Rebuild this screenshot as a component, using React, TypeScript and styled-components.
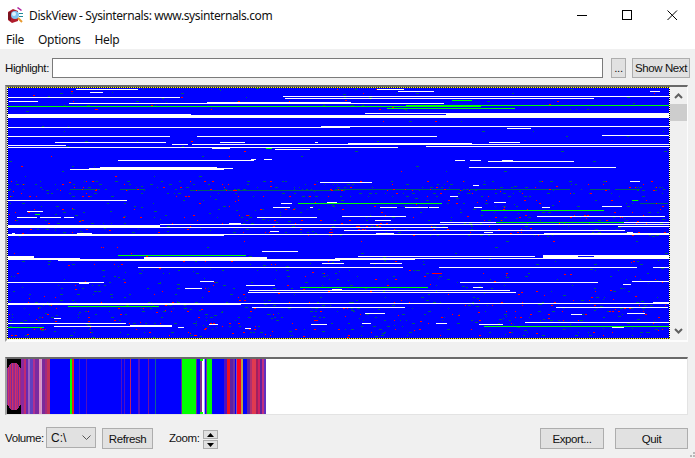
// App.tsx
import React from "react";
import styled, { createGlobalStyle } from "styled-components";

const GlobalStyle = createGlobalStyle`
  html, body {
    margin: 0;
    padding: 0;
    background: #f0f0f0;
  }
  body {
    font-family: "Liberation Sans", Arial, sans-serif;
    font-size: 11.5px;
    color: #000;
  }
`;

const Win = styled.div`
  position: relative;
  width: 695px;
  height: 458px;
  overflow: hidden;
  display: flex;
  flex-direction: column;
  background: #f0f0f0;
`;

const TitleBar = styled.div`
  display: flex;
  align-items: center;
  height: 30px;
  flex: none;
  background: #fff;
  padding-left: 7px;
`;

const TitleText = styled.span`
  margin-left: 5px;
  font-family: "Noto Sans", sans-serif;
  font-size: 12px;
  letter-spacing: -0.38px;
  color: #111;
`;

const WinButtons = styled.div`
  display: flex;
  margin-left: auto;
`;

const WinButton = styled.div`
  width: 45px;
  height: 29px;
  display: flex;
  align-items: center;
  justify-content: center;
`;

const MenuBar = styled.div`
  display: flex;
  align-items: center;
  gap: 14px;
  height: 18px;
  flex: none;
  background: #fff;
  padding: 0 0 1px 6px;
`;

const MenuItem = styled.span`
  font-family: "Noto Sans", sans-serif;
  font-size: 12px;
  letter-spacing: -0.3px;
  color: #111;
`;

const Toolbar = styled.div`
  display: flex;
  align-items: center;
  height: 20px;
  flex: none;
  margin: 9px 5px 7px 5px;
`;

const Label = styled.span`
  font-size: 11.5px;
  letter-spacing: -0.4px;
  color: #111;
`;

const HighlightInput = styled.div`
  flex: 1;
  height: 20px;
  box-sizing: border-box;
  margin: 0 8px 0 3px;
  background: #fff;
  border: 1px solid #7a7a7a;
`;

const Btn = styled.div<{ $w: number; $h?: number; $ml?: number }>`
  box-sizing: border-box;
  flex: none;
  width: ${(p) => p.$w}px;
  height: ${(p) => p.$h ?? 20}px;
  margin-left: ${(p) => p.$ml ?? 0}px;
  display: flex;
  align-items: center;
  justify-content: center;
  white-space: nowrap;
  background: #e1e1e1;
  border: 1px solid #adadad;
  font-size: 11.5px;
  letter-spacing: -0.4px;
  color: #111;
`;

const ChartFrame = styled.div`
  display: flex;
  flex: none;
  height: 257px;
  box-sizing: border-box;
  margin: 0 7px 0 5px;
  background: #f0f0f0;
  border-top: 2px solid #696969;
  border-left: 2px solid #a0a0a0;
  border-right: 1px solid #fcfcfc;
  border-bottom: 2px solid #fcfcfc;
`;

const Canvas = styled.svg`
  display: block;
  flex: none;
  shape-rendering: crispEdges;
`;

const ScrollBar = styled.div`
  flex: 1;
  display: flex;
  flex-direction: column;
  background: #f0f0f0;
`;

const ScrollArrow = styled.div`
  height: 17px;
  flex: none;
  display: flex;
  align-items: center;
  justify-content: center;
`;

const ScrollThumb = styled.div`
  height: 17px;
  flex: none;
  background: #cdcdcd;
`;

const ScrollTrack = styled.div`
  flex: 1;
`;

const StripFrame = styled.div`
  flex: none;
  height: 58px;
  box-sizing: border-box;
  margin: 15px 7px 0 5px;
  background: #fff;
  border-top: 2px solid #696969;
  border-left: 2px solid #a0a0a0;
  border-right: 1px solid #e3e3e3;
  border-bottom: 1px solid #e3e3e3;
`;

const Footer = styled.div`
  display: flex;
  align-items: flex-start;
  flex: none;
  margin: 13px 7px 0 5px;
`;

const FooterLabel = styled(Label)<{ $w: number; $ml?: number }>`
  flex: none;
  width: ${(p) => p.$w}px;
  margin-left: ${(p) => p.$ml ?? 0}px;
  line-height: 20px;
`;

const VolumeSelect = styled.div`
  box-sizing: border-box;
  width: 50px;
  height: 21px;
  margin-top: -1px;
  padding: 0 4px 0 4px;
  display: flex;
  align-items: center;
  justify-content: space-between;
  background: #e1e1e1;
  border: 1px solid #adadad;
  font-size: 12px;
  color: #111;
`;

const Spinner = styled.div`
  display: flex;
  flex-direction: column;
  gap: 1px;
  width: 15px;
  margin-top: 2px;
`;

const SpinButton = styled.div`
  box-sizing: border-box;
  height: 9px;
  display: flex;
  align-items: center;
  justify-content: center;
  background: #e1e1e1;
  border: 1px solid #adadad;
`;

const Spacer = styled.div`
  flex: 1;
`;

const Grip = styled.svg`
  position: absolute;
  right: 0;
  bottom: 0;
`;

// page coordinates: x1, x2, y, height
type Run = [number, number, number, number?];

const whiteRuns: Run[] = [
  [76, 138, 88], [90, 103, 91], [8, 180, 96], [9, 38, 100], [69, 207, 102], [207, 340, 101, 2],
  [283, 340, 95], [285, 340, 97], [8, 191, 113, 4], [191, 340, 114, 3], [8, 340, 126], [321, 340, 125],
  [8, 170, 135], [197, 340, 135], [55, 166, 141], [220, 245, 141], [315, 318, 141], [8, 66, 144],
  [172, 188, 143], [192, 340, 143], [8, 340, 146], [212, 230, 147], [275, 310, 148], [118, 254, 159],
  [251, 256, 158], [264, 272, 158], [100, 217, 166], [89, 233, 167], [70, 224, 168], [320, 340, 181],
  [8, 127, 199], [281, 292, 202], [327, 337, 201], [273, 290, 206], [310, 313, 206], [27, 43, 210],
  [377, 404, 88], [398, 434, 90], [650, 660, 90], [335, 669, 95], [335, 594, 97], [335, 351, 101, 2],
  [351, 444, 102], [446, 669, 112, 5], [365, 446, 112], [335, 607, 114, 3], [335, 669, 125], [335, 350, 126],
  [507, 531, 127], [335, 437, 135], [602, 669, 134], [348, 472, 142], [489, 520, 141], [335, 669, 143],
  [335, 398, 146], [426, 669, 145], [469, 616, 166], [488, 574, 160], [455, 465, 159], [470, 481, 159],
  [502, 513, 159], [630, 640, 180], [335, 372, 181], [473, 479, 184], [450, 458, 195], [494, 506, 201],
  [380, 397, 206], [405, 428, 206], [429, 439, 206], [474, 482, 206], [542, 550, 206], [602, 622, 205],
  [17, 37, 216], [40, 61, 216], [64, 74, 216], [257, 317, 216], [8, 160, 224, 2], [160, 340, 223],
  [229, 241, 222], [13, 25, 225], [8, 340, 226], [270, 279, 230], [8, 224, 233, 2], [77, 92, 232],
  [12, 15, 232], [224, 340, 233], [262, 298, 250], [8, 34, 255, 3], [34, 80, 257, 2], [8, 58, 257, 2],
  [58, 340, 258, 2], [144, 267, 256, 2], [322, 340, 262], [138, 340, 266], [200, 214, 280], [8, 104, 281],
  [79, 89, 282], [185, 202, 287], [246, 275, 284], [332, 340, 288], [249, 340, 289], [248, 340, 291],
  [8, 241, 302, 2], [241, 340, 302], [252, 340, 306], [54, 61, 317], [8, 126, 322], [209, 218, 323],
  [311, 327, 323], [54, 172, 325], [130, 172, 324], [178, 184, 326], [245, 251, 327], [342, 406, 215],
  [537, 665, 215], [375, 391, 219], [335, 669, 223], [440, 669, 221], [335, 448, 226], [618, 669, 225],
  [344, 625, 229], [484, 493, 231], [335, 669, 233], [376, 394, 232], [627, 633, 231], [544, 669, 232],
  [335, 415, 257, 2], [543, 669, 254, 3], [358, 535, 255], [414, 669, 257], [335, 344, 262], [370, 402, 262],
  [335, 403, 266], [439, 637, 266], [653, 669, 266], [460, 598, 281], [632, 669, 280], [623, 631, 283],
  [335, 342, 288], [473, 483, 286], [335, 510, 289], [335, 516, 291], [335, 669, 302], [653, 669, 301, 2],
  [335, 405, 306], [556, 668, 306], [365, 385, 312], [571, 582, 313], [627, 645, 312], [525, 669, 321],
  [362, 371, 322], [479, 503, 323], [436, 447, 322], [612, 624, 326],
];

const greenRuns: Run[] = [
  [8, 340, 105], [266, 272, 147], [298, 340, 202], [452, 472, 99], [406, 669, 104], [335, 481, 105],
  [387, 515, 107], [335, 442, 202], [481, 604, 209], [632, 638, 199], [35, 40, 213], [118, 246, 254],
  [300, 340, 286], [68, 159, 305], [8, 44, 326], [496, 624, 221], [335, 428, 286], [484, 669, 325],
];

const blueRuns: Run[] = [
  [578, 594, 255], [365, 446, 113],
];

const redRuns: Run[] = [
  [178, 180, 96], [510, 514, 112], [607, 609, 114], [69, 71, 181], [432, 442, 272],
];

const tealRuns: Run[] = [
  [210, 340, 189], [335, 460, 188], [470, 570, 188], [590, 610, 188], [615, 640, 188], [70, 100, 188],
  [120, 145, 188], [190, 215, 189], [530, 560, 145], [645, 665, 145], [640, 668, 202],
];

// how many noise dots per row at a given pixel row
const noiseFor = (y: number): number => {
  if (y === 188) return 50;
  if (y >= 180 && y <= 196 && y % 3 === 0) return 38;
  if (y >= 197 && y <= 215) return y % 3 === 1 ? 17 : 2;
  if (y >= 216 && y <= 235) return y % 3 === 0 ? 26 : 3;
  if (y >= 236 && y <= 254) return y % 6 === 0 ? 5 : 0;
  if (y >= 255 && y <= 300) return y % 3 === 2 ? 14 : 2;
  if (y >= 301 && y <= 336) return y % 3 === 1 ? 26 : 4;
  if (y >= 87 && y <= 110) return y % 4 === 0 ? 8 : 1;
  return y % 5 === 0 ? 4 : 0;
};

const runsToPath = (runs: Run[]) =>
  runs.map(([a, b, y, h = 1]) => `M${a} ${y}h${b - a}v${h}h${a - b}z`).join("");

const buildNoise = () => {
  let seed = 48271;
  const rand = () => {
    seed = (seed * 16807) % 2147483647;
    return seed / 2147483647;
  };
  const red: Run[] = [];
  const teal: Run[] = [];
  for (let y = 87; y < 337; y++) {
    const count = noiseFor(y);
    for (let i = 0; i < count; i++) {
      const x = 8 + Math.floor(rand() * 658);
      if (rand() < 0.35) {
        red.push([x, x + 1 + Math.floor(rand() * 2), y]);
      } else {
        teal.push([x, x + 1 + Math.floor(rand() * 3), y]);
      }
    }
  }
  return { red, teal };
};

const noise = buildNoise();

const DiskChart = () => (
  <Canvas width={663} height={252} viewBox="7 86 663 252">
    <rect x="7" y="86" width="663" height="252" fill="#0000ff" />
    <path d={runsToPath([...noise.teal, ...tealRuns])} fill="#005c68" />
    <path d={runsToPath([...noise.red, ...redRuns])} fill="#ff0000" />
    <path d={runsToPath(whiteRuns)} fill="#ffffff" />
    <path d={runsToPath(greenRuns)} fill="#00ff00" />
    <path d={runsToPath(blueRuns)} fill="#0000ff" />
    <line x1="7" y1="86.5" x2="670" y2="86.5" stroke="#20202a" />
    <line x1="7" y1="86.5" x2="670" y2="86.5" stroke="#ffff00" strokeDasharray="1 1" />
    <line x1="7" y1="337.5" x2="670" y2="337.5" stroke="#20202a" />
    <line x1="7" y1="337.5" x2="670" y2="337.5" stroke="#ffff00" strokeDasharray="1 1" />
    <line x1="7.5" y1="87" x2="7.5" y2="337" stroke="#000" />
    <line x1="7.5" y1="87" x2="7.5" y2="337" stroke="#fff" strokeDasharray="1 1" />
    <line x1="669.5" y1="87" x2="669.5" y2="337" stroke="#000" />
    <line x1="669.5" y1="87" x2="669.5" y2="337" stroke="#fff" strokeDasharray="1 1" />
  </Canvas>
);

type Band = [number, number, string];

const bands: Band[] = [
  [21, 24, "#8a2aa0"], [24, 26, "#c02a70"], [26, 28, "#6a2ab0"], [28, 30, "#a060c0"], [30, 33, "#6040c0"],
  [33, 35, "#b03090"], [35, 39, "#7a2aa0"], [39, 41, "#e090c0"], [41, 42, "#d0a0d0"], [42, 45, "#7a2a9a"],
  [45, 47, "#a02a80"], [47, 50, "#c0305a"], [70, 72, "#00ff00"], [72, 74, "#e02020"], [79, 80, "#4010d0"],
  [86, 87, "#5010c0"], [121, 122, "#5010c0"], [124, 125, "#5010c0"], [130, 131, "#c02060"], [138, 140, "#5010c0"],
  [148, 149, "#7010a0"], [155, 156, "#106090"], [181, 182, "#7020a0"], [182, 196, "#00ff00"], [196, 197, "#7020a0"],
  [200, 202, "#803090"], [202, 204, "#ffffff"], [204, 205, "#a0a0ff"], [206, 207, "#803090"], [207, 212, "#00ff00"],
  [224, 227, "#5010c0"], [227, 230, "#f01020"], [230, 233, "#6020a0"], [233, 235, "#7030a0"], [236, 237, "#8050c0"],
  [237, 241, "#ff0020"], [241, 243, "#c0a040"], [247, 250, "#6020a0"], [250, 252, "#b03070"], [252, 256, "#e03a50"],
  [256, 258, "#a02060"], [258, 260, "#d02060"], [260, 262, "#6020a0"], [262, 264, "#c03080"], [264, 266, "#6030c0"],
];

const blobColors = ["#8a2a98", "#d03068", "#a02a90", "#c82a60", "#7a2aa0", "#d03068", "#a02a80"];

// the black leader block holds a rounded column, its ends cut like a hexagon
const blobInset = (x: number) => {
  const d = Math.min(x - 7, 20 - x);
  return Math.max(0, 5 - d * 1.4);
};

const DiskStrip = () => (
  <Canvas width={259} height={55} viewBox="7 358 259 55">
    <rect x="7" y="358" width="14" height="55" fill="#000" />
    <rect x="21" y="358" width="245" height="55" fill="#0000ff" />
    {Array.from({ length: 14 }, (_, i) => {
      const x = 7 + i;
      const inset = blobInset(x);
      return (
        <rect
          key={x}
          x={x}
          y={362 + inset}
          width="1"
          height={47 - inset * 2}
          fill={blobColors[i % blobColors.length]}
        />
      );
    })}
    {bands.map(([a, b, color]) => (
      <rect key={a} x={a} y="358" width={b - a} height="55" fill={color} />
    ))}
    <rect x="200" y="358" width="3" height="2" fill="#00ff00" />
    <rect x="200" y="411" width="3" height="2" fill="#00ff00" />
  </Canvas>
);

const AppIcon = () => (
  <svg width="17" height="18" viewBox="0 0 17 18">
    <path d="M1 6 L6 3 L11 5 L11 15 L5 17 L1 14 Z" fill="#b01c2c" />
    <path d="M1 7 L4 5 L4 15 L1 13 Z" fill="#7a1420" />
    <path d="M11 1 L15 4 L14 5 L10 2 Z" fill="#b020a0" />
    <circle cx="8" cy="9" r="4" fill="#7fc4f0" />
    <circle cx="7" cy="8" r="2" fill="#e0f4ff" />
    <rect x="12" y="7" width="4" height="1" fill="#208898" />
    <rect x="12" y="10" width="4" height="1" fill="#208898" />
    <path d="M11 12 L15 16" stroke="#e89a30" strokeWidth="2" />
  </svg>
);

const WinGlyph = ({ kind }: { kind: "min" | "max" | "close" }) => (
  <svg width="11" height="11" viewBox="0 0 11 11" fill="none" stroke="#000" shapeRendering={kind === "close" ? "auto" : "crispEdges"}>
    {kind === "min" && <path d="M0 5.5H10" />}
    {kind === "max" && <rect x="0.5" y="0.5" width="9" height="9" />}
    {kind === "close" && <path d="M0.5 0.5L10 10M10 0.5L0.5 10" />}
  </svg>
);

const Chevron = ({ up }: { up?: boolean }) => (
  <svg width="9" height="7" viewBox="0 0 9 7" fill="none" stroke="#606060" strokeWidth="2">
    <path d={up ? "M1 6L4.5 2.5L8 6" : "M1 1L4.5 4.5L8 1"} />
  </svg>
);

const Triangle = ({ up }: { up?: boolean }) => (
  <svg width="7" height="4" viewBox="0 0 7 4" fill="#000">
    <path d={up ? "M3.5 0L7 4H0Z" : "M0 0H7L3.5 4Z"} />
  </svg>
);

const App = () => (
  <Win>
    <GlobalStyle />
    <TitleBar>
      <AppIcon />
      <TitleText>DiskView - Sysinternals: www.sysinternals.com</TitleText>
      <WinButtons>
        <WinButton><WinGlyph kind="min" /></WinButton>
        <WinButton><WinGlyph kind="max" /></WinButton>
        <WinButton><WinGlyph kind="close" /></WinButton>
      </WinButtons>
    </TitleBar>
    <MenuBar>
      <MenuItem>File</MenuItem>
      <MenuItem>Options</MenuItem>
      <MenuItem>Help</MenuItem>
    </MenuBar>
    <Toolbar>
      <Label>Highlight:</Label>
      <HighlightInput />
      <Btn $w={15}>...</Btn>
      <Btn $w={58} $ml={6}>Show Next</Btn>
    </Toolbar>
    <ChartFrame>
      <DiskChart />
      <ScrollBar>
        <ScrollArrow><Chevron up /></ScrollArrow>
        <ScrollThumb />
        <ScrollTrack />
        <ScrollArrow><Chevron /></ScrollArrow>
      </ScrollBar>
    </ChartFrame>
    <StripFrame>
      <DiskStrip />
    </StripFrame>
    <Footer>
      <FooterLabel $w={41}>Volume:</FooterLabel>
      <VolumeSelect>
        C:\
        <svg width="9" height="6" viewBox="0 0 9 6" fill="none" stroke="#555">
          <path d="M0.5 0.5L4.5 4.5L8.5 0.5" />
        </svg>
      </VolumeSelect>
      <Btn $w={51} $h={21} $ml={6}>Refresh</Btn>
      <FooterLabel $w={34} $ml={16}>Zoom:</FooterLabel>
      <Spinner>
        <SpinButton><Triangle up /></SpinButton>
        <SpinButton><Triangle /></SpinButton>
      </Spinner>
      <Spacer />
      <Btn $w={64} $h={21}>Export...</Btn>
      <Btn $w={73} $h={21} $ml={11}>Quit</Btn>
    </Footer>
    <Grip width="7" height="7" viewBox="0 0 7 7" fill="#b8b8b8">
      <rect x="5" y="1" width="2" height="2" />
      <rect x="2" y="4" width="2" height="2" />
      <rect x="5" y="4" width="2" height="2" />
    </Grip>
  </Win>
);

export default App;
